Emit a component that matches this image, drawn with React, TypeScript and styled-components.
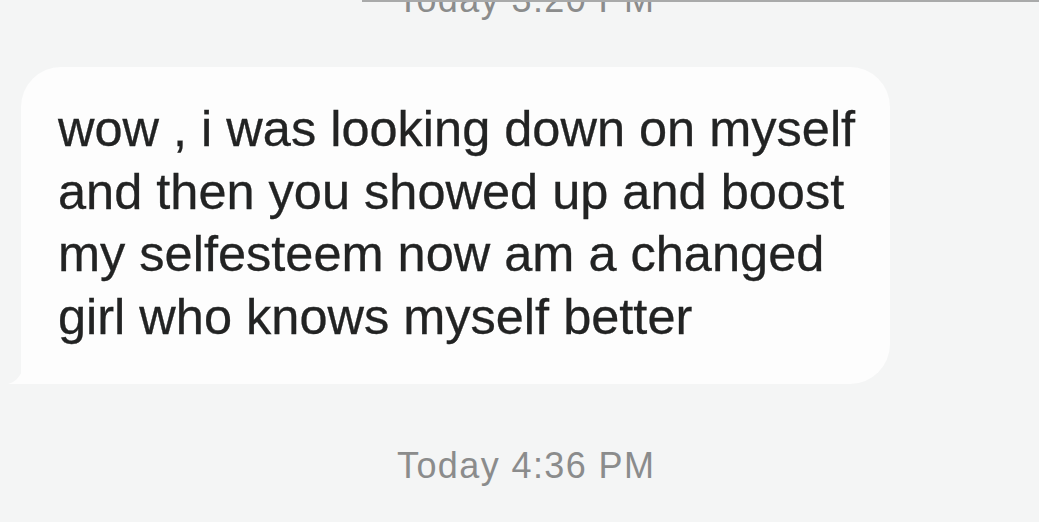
import styled, { createGlobalStyle } from "styled-components";

const Global = createGlobalStyle`
  html, body {
    margin: 0;
    padding: 0;
    background: #f4f5f5;
  }
  body {
    font-family: "Liberation Sans", Arial, Helvetica, sans-serif;
    overflow: hidden;
  }
`;

function App() {
  return (
    <Page>
      <Global />
      <TopRule />
      <Stamp className="top">Today 3:20 PM</Stamp>
      <Row>
        <Bubble>
          <Tail width="26" height="34" viewBox="0 0 26 34">
            <path d="M16 0 L26 0 L26 34 L0 34 C8 32 16 24 16 10 Z" fill="#fdfdfd" />
          </Tail>
          wow , i was looking down on myself and then you showed up and boost
          my selfesteem now am a changed girl who knows myself better
        </Bubble>
      </Row>
      <Stamp>Today 4:36 PM</Stamp>
    </Page>
  );
}

export default App;

const Page = styled.div`
  width: 1039px;
  height: 522px;
  display: flex;
  flex-direction: column;
  background: #f4f5f5;
`;

const TopRule = styled.div`
  height: 2px;
  margin-left: 362px;
  background: #a9aaaa;
  position: relative;
  z-index: 1;
`;

const Stamp = styled.div`
  font-size: 36px;
  line-height: 36px;
  letter-spacing: 1.4px;
  color: #8b8c8c;
  padding-left: 397px;
  margin-top: 64px;
  &.top {
    margin-top: -20px;
  }
`;

const Row = styled.div`
  display: flex;
  padding-left: 21px;
  margin-top: 49px;
`;

const Bubble = styled.div`
  position: relative;
  box-sizing: border-box;
  width: 869px;
  padding: 31px 14px 36px 37px;
  background: #fdfdfd;
  border-radius: 40px 40px 40px 0;
  font-size: 50.5px;
  line-height: 62.5px;
  color: #222323;
  -webkit-text-stroke: 0.3px #222323;
`;

const Tail = styled.svg`
  position: absolute;
  left: -13px;
  bottom: 0;
  display: block;
`;
